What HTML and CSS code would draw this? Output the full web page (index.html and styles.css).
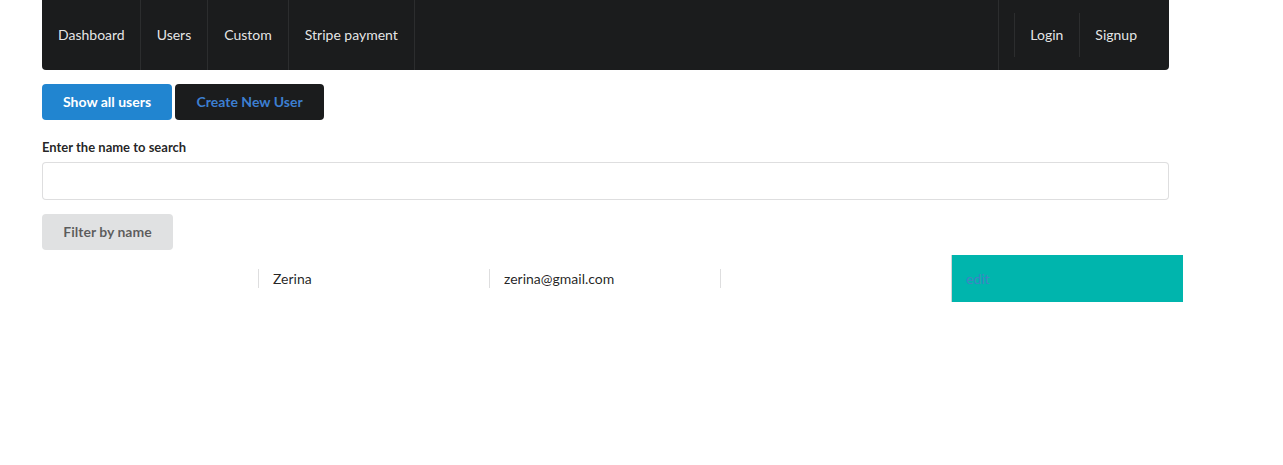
FILE: index.html
```html
<!DOCTYPE html>
<html>
<head>
<meta charset="utf-8">
<link rel="stylesheet" href="styles.css">
</head>
<body>
<div class="page">
  <nav class="menu">
    <a class="item">Dashboard</a>
    <a class="item">Users</a>
    <a class="item">Custom</a>
    <a class="item">Stripe payment</a>
    <div class="spacer"></div>
    <div class="right">
      <a class="sub">Login</a>
      <a class="sub">Signup</a>
    </div>
  </nav>

  <div class="actions">
    <button class="btn primary">Show all users</button>
    <button class="btn dark">Create New User</button>
  </div>

  <form class="form">
    <label class="label">Enter the name to search</label>
    <input class="input" type="text">
    <button type="button" class="btn grey">Filter by name</button>
  </form>

  <div class="row">
    <div class="cell"><div class="inner"></div></div>
    <div class="cell"><div class="inner div">Zerina</div></div>
    <div class="cell"><div class="inner div">zerina@gmail.com</div></div>
    <div class="cell"><div class="inner div"></div></div>
    <div class="cell teal"><div class="inner"><a class="edit">edit</a></div></div>
  </div>
</div>
</body>
</html>
```

FILE: styles.css
```css
* { box-sizing: border-box; }
html, body { margin: 0; padding: 0; background: #fff; }
body {
  font-family: Lato, "Helvetica Neue", Arial, sans-serif;
  font-size: 14px;
  color: rgba(0,0,0,.87);
  line-height: 1.4285em;
}
.page {
  width: 1127px;
  margin-left: 42px;
}
.menu {
  display: flex;
  height: 70px;
  background: #1b1c1d;
  border-radius: 0 0 4px 4px;
}
.item {
  display: flex;
  align-items: center;
  padding: 0 16px;
  color: rgba(255,255,255,.9);
  border-right: 1px solid rgba(255,255,255,.08);
  line-height: 1;
}
.item:first-child { padding-right: 15px; }
.spacer { flex: 1; }
.right {
  display: flex;
  align-items: center;
  border-left: 1px solid rgba(255,255,255,.08);
  padding: 0 16px 0 15px;
}
.sub {
  display: flex;
  align-items: center;
  height: 44px;
  padding: 0 16px 0 15px;
  color: rgba(255,255,255,.9);
  border-left: 1px solid rgba(255,255,255,.08);
  line-height: 1;
}
.actions {
  display: flex;
  gap: 3px;
  margin-top: 14px;
}
.btn {
  font-family: Lato, "Helvetica Neue", Arial, sans-serif;
  font-size: 14px;
  font-weight: 700;
  line-height: 1;
  height: 36px;
  padding: 0 21px;
  border: none;
  border-radius: 4px;
  cursor: pointer;
}
.primary { background: #2185d0; color: #fff; }
.dark { background: #1b1c1d; color: #3d7fd1; padding: 0 21px 0 21px; width: 149px; }
.grey { background: #e0e1e2; color: rgba(0,0,0,.6); width: 131px; }
.form {
  display: flex;
  flex-direction: column;
  align-items: flex-start;
  margin-top: 21px;
}
.label {
  font-size: 13px;
  font-weight: 700;
  line-height: 13px;
  margin-bottom: 8px;
}
.input {
  width: 100%;
  height: 38px;
  border: 1px solid rgba(34,36,38,.15);
  border-radius: 4px;
  font-family: Lato, sans-serif;
  font-size: 14px;
  padding: 0 14px;
  margin-bottom: 14px;
}
.row {
  display: grid;
  grid-template-columns: repeat(5, 231px);
  margin-left: -14px;
  margin-top: 5px;
}
.cell {
  padding: 14px 0;
  height: 47px;
}
.inner {
  height: 19px;
  line-height: 19px;
  padding-left: 14px;
}
.inner.div { border-left: 1px solid rgba(34,36,38,.15); margin-left: -1px; }
.teal {
  background: #00b5ad;
  border-left: 1px solid #d4d4d5;
  margin-left: -1px;
}
.edit { color: #4183c4; }
```
